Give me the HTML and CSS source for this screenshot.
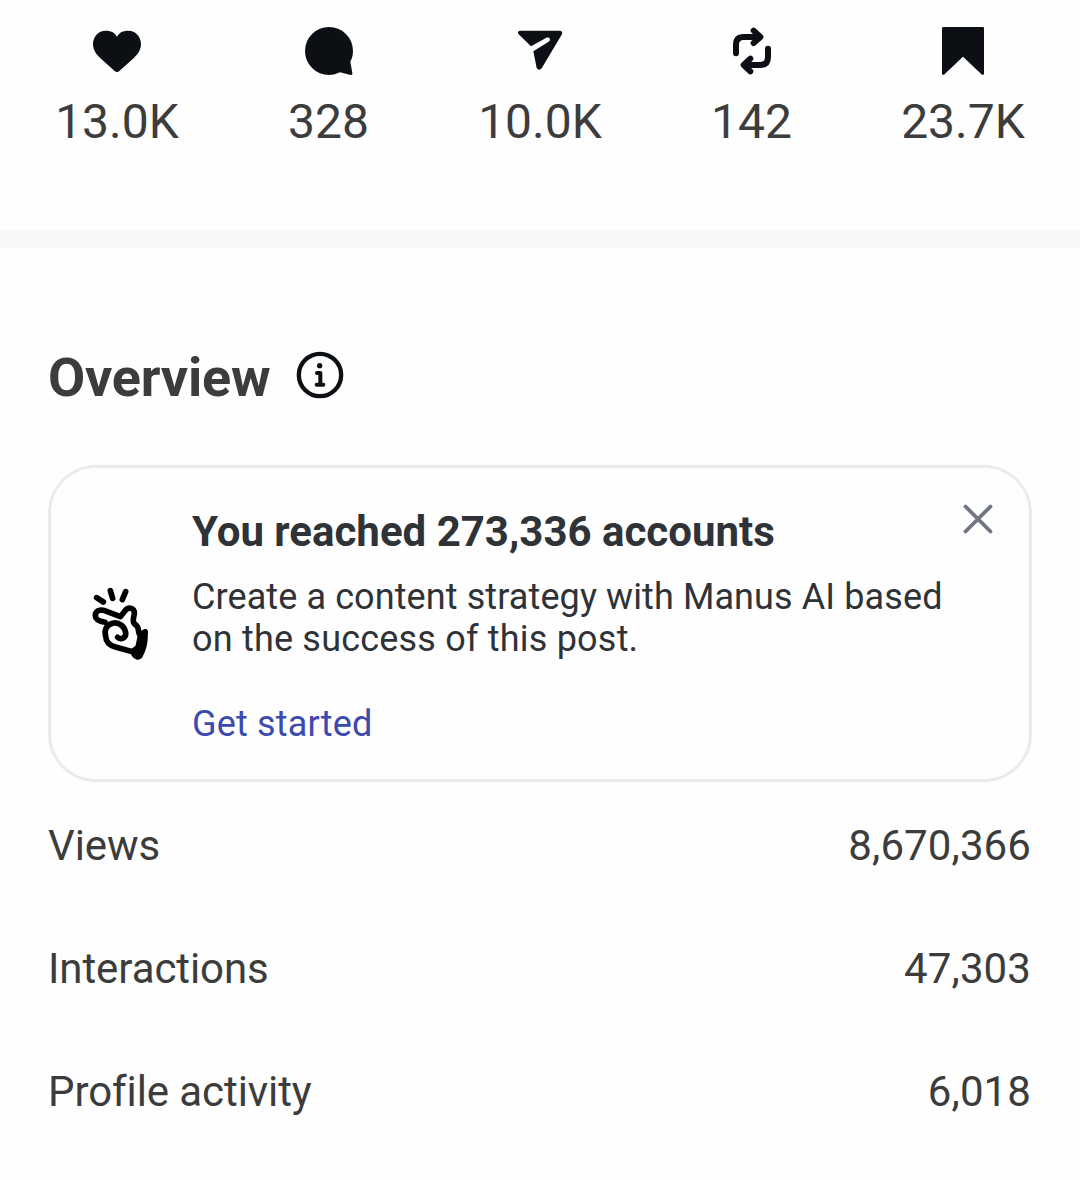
FILE: index.html
```html
<!DOCTYPE html>
<html lang="en">
<head>
<meta charset="utf-8">
<title>Post insights</title>
<link rel="stylesheet" href="styles.css">
</head>
<body>
<section class="stats">
  <div class="stat">
    <svg class="stat-icon" viewBox="-9 0 240 210"><path d="M111 65C101 48 88 47 77 47C55 47 39 66 39 87C39 107 51 120 63 131L103 167Q111 175 119 167L159 131C171 120 183 107 183 87C183 66 167 47 145 47C134 47 121 48 111 65Z"/></svg>
    <span>13.0K</span>
  </div>
  <div class="stat">
    <svg class="stat-icon" viewBox="-3 0 240 210"><path d="M117 36A72 72 0 1 0 117 180C130 180 139 177 150 172L182 180Q189 181 187 174L181 140C186 130 189 121 189 108A72 72 0 0 0 117 36Z"/></svg>
    <span>328</span>
  </div>
  <div class="stat">
    <svg class="stat-icon" viewBox="0 0 240 210"><path d="M60 47H180Q190 49 185 59L125 160Q117 169 110 159L100 109L146 80C155 73 147 64 138 69L93 94L56 58Q50 49 60 47Z"/></svg>
    <span>10.0K</span>
  </div>
  <div class="stat">
    <svg class="stat-icon line" viewBox="0 0 240 210"><path d="M72 115V89Q72 66 95 66H143M125 47L145 66L125 84M168 101V126Q168 150 145 150H97M115 131L95 150L115 169"/></svg>
    <span>142</span>
  </div>
  <div class="stat">
    <svg class="stat-icon" viewBox="0 0 240 210"><path d="M61 36H179Q183 36 183 40V176Q182 181 177 179L120 125L63 179Q58 181 57 176V40Q57 36 61 36Z"/></svg>
    <span>23.7K</span>
  </div>
</section>
<main class="overview">
  <header class="heading">
    <h1>Overview</h1>
    <svg class="info" viewBox="0 0 210 210"><circle class="ring" cx="105" cy="105" r="63.5"/><circle cx="104" cy="77" r="8"/><path class="stem" d="M96 99H106V134M95 134H115"/></svg>
  </header>
  <section class="card">
    <svg class="snap" viewBox="0 0 240 285">
      <path d="M50 68L70 81M91 47L98 70M137 50L127 74"/>
      <path d="M75 142C60 139 46 134 46 122C46 102 69 103 82 110L121 125L133 110C143 94 165 97 163 116C158 139 158 144 170 152C178 161 173 170 179 179L195 171"/>
      <path d="M113 187C124 196 139 188 137 173C134 154 118 142 101 144C81 148 71 163 77 184C78 202 88 211 106 216L158 230"/>
      <path class="cuff" d="M181 182L196 170V184C196 210 188 230 180 244Q171 251 162 239L159 227L173 217Z"/>
    </svg>
    <div class="card-copy">
      <h2>You reached 273,336 accounts</h2>
      <p><span class="lead">Create a content strategy with Manus AI based</span><br>on the success of this post.</p>
      <a class="action">Get started</a>
    </div>
    <svg class="close" viewBox="0 0 30 30"><path d="M2.5 2.5L27.5 27.5M27.5 2.5L2.5 27.5"/></svg>
  </section>
  <dl class="metrics">
    <div class="metric"><dt>Views</dt><dd>8,670,366</dd></div>
    <div class="metric"><dt>Interactions</dt><dd>47,303</dd></div>
    <div class="metric"><dt>Profile activity</dt><dd>6,018</dd></div>
  </dl>
</main>
</body>
</html>
```
FILE: styles.css
```css
* { box-sizing: border-box; }
body {
  margin: 0;
  background: #fefefe;
  color: #3c3c3c;
  font-family: Roboto, "Liberation Sans", sans-serif;
}
h1, h2, p, dl, dt, dd { margin: 0; }
svg { flex: none; fill: #0c1014; }
.stats {
  display: grid;
  grid-template-columns: repeat(5, 1fr);
  height: 248px;
  padding: 15px 11.25px 0;
  border-bottom: 18px solid #f7f9f9;
}
.stat {
  display: flex;
  flex-direction: column;
  align-items: center;
  gap: 9px;
  font-size: 48px;
  line-height: 56px;
}
.stat-icon { width: 80px; height: 70px; }
.line {
  fill: none;
  stroke: #0c1014;
  stroke-width: 18;
  stroke-linecap: round;
  stroke-linejoin: round;
}
.overview { padding: 92px 48px 0; }
.heading {
  display: flex;
  align-items: center;
  gap: 16px;
  height: 70px;
}
.heading h1 {
  width: 221px;
  padding-top: 5px;
  font-size: 54px;
  line-height: 64px;
  letter-spacing: -0.22px;
}
.info { width: 70px; height: 70px; }
.ring { fill: none; stroke: #0c1014; stroke-width: 13; }
.stem { fill: none; stroke: #0c1014; stroke-width: 12; stroke-linecap: round; stroke-linejoin: round; }
.card {
  display: flex;
  height: 317px;
  margin-top: 55px;
  padding: 36px 36px 0 29px;
  border: 3px solid #e9eced;
  border-radius: 48px;
}
.snap {
  width: 80px;
  height: 95px;
  margin-top: 71px;
  fill: none;
  stroke: #000;
  stroke-width: 17;
  stroke-linecap: round;
  stroke-linejoin: round;
}
.cuff { fill: #000; stroke-width: 15; }
.card-copy { flex: 1; margin-left: 32px; color: #2f3337; white-space: nowrap; }
.card-copy h2 { padding-top: 3px; font-size: 42px; line-height: 50px; }
.card-copy p { margin-top: 19px; font-size: 36px; line-height: 42px; letter-spacing: 0.2px; }
.card-copy .lead { letter-spacing: 0.1px; }
.action { display: block; margin-top: 43px; color: #3b4ab0; font-size: 36px; line-height: 42px; letter-spacing: 0.18px; }
.close {
  width: 30px;
  height: 30px;
  fill: none;
  stroke: #6f767f;
  stroke-width: 3.8;
  stroke-linecap: round;
}
.metrics { padding-top: 2px; }
.metric {
  display: flex;
  justify-content: space-between;
  align-items: center;
  height: 123px;
  font-size: 42px;
  line-height: 50px;
}
.metric dt { letter-spacing: -0.08px; }
.metric dd { padding-right: 1px; letter-spacing: 0.1px; }
```
